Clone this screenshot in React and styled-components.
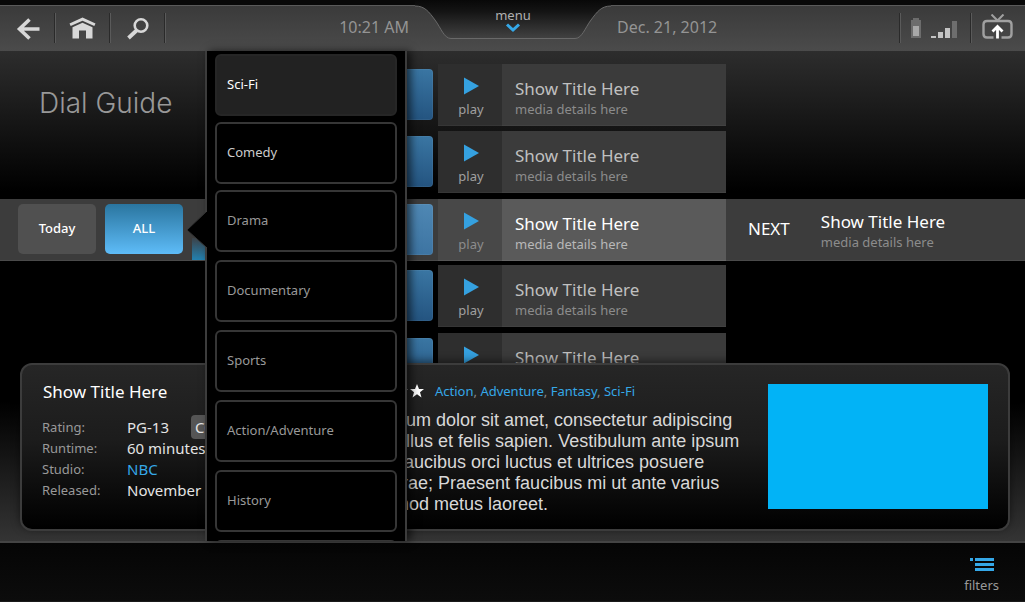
import React from 'react'
import styled, { createGlobalStyle, css } from 'styled-components'

const GlobalStyle = createGlobalStyle`
  * {
    box-sizing: border-box;
  }
  body {
    margin: 0;
    background: #000;
    color: #fff;
    font-family: "Noto Sans", "Open Sans", sans-serif;
  }
  button {
    font-family: inherit;
    border: 0;
    padding: 0;
    background: none;
    color: inherit;
    cursor: pointer;
  }
  a {
    color: #35a8e8;
    text-decoration: none;
  }
  h1, h2, h3, p, ul, dl, dd {
    margin: 0;
    padding: 0;
  }
`

const Page = styled.div`
  display: flex;
  flex-direction: column;
  min-height: 100vh;
`

/* top bar */
const TopBar = styled.header`
  display: flex;
  height: 51px;
  border-top: 5px solid #080808;
  background: linear-gradient(#3a3a3a, #4b4b4b);
  box-shadow: inset 0 1px #5a5a5a;
`
const BarSide = styled.div`
  flex: 1;
  display: flex;
  align-items: center;
  justify-content: space-between;
  padding-left: ${(p) => (p.$right ? '6px' : '1px')};
  padding-right: ${(p) => (p.$right ? '0' : '6px')};
`
const Tools = styled.nav`
  display: flex;
  align-items: center;
`
const divider = css`
  content: '';
  width: 2px;
  height: 30px;
  background: linear-gradient(to right, #2a2a2a 50%, #5a5a5a 50%);
`
const Tool = styled.button`
  display: flex;
  align-items: center;
  width: 55px;
  height: 46px;
  svg {
    flex: 1;
  }
  &::after {
    ${divider}
  }
`
const Status = styled.div`
  display: flex;
  align-items: center;
  gap: 9px;
  height: 46px;
  &::before {
    ${divider}
  }
`
const CastButton = styled.button`
  display: flex;
  align-items: center;
  gap: 10px;
  margin-left: 3px;
  padding-right: 12px;
  &::before {
    ${divider}
  }
`
const Clock = styled.span`
  font-size: 16px;
  line-height: 20px;
  padding-bottom: 2px;
  color: #949494;
`
const MenuTab = styled.button`
  display: grid;
  width: 196px;
  height: 46px;
  margin-top: -5px;
  > * {
    grid-area: 1 / 1;
  }
`
const MenuLabel = styled.span`
  display: flex;
  flex-direction: column;
  align-items: center;
  padding-top: 7px;
  font-size: 13px;
  line-height: 16px;
  color: #b0b0b0;
`

/* guide */
const Main = styled.main`
  position: relative;
  flex: 1;
  display: flex;
  flex-direction: column;
  border-bottom: 2px solid #444;
  background: linear-gradient(#2d2d2d, #000 140px, #000 350px, #343434);
`
const Guide = styled.section`
  display: grid;
  grid-template-columns: 438px 64px 224px 1fr;
  grid-template-rows: 62px 63px 61px 63px 30px;
  row-gap: 5px;
  height: 312px;
  padding-top: 13px;
  overflow: hidden;
`
const Heading = styled.h1`
  grid-area: 1 / 1;
  align-self: center;
  padding: 15px 0 0 39px;
  font-family: Inter, "Liberation Sans", sans-serif;
  font-size: 28px;
  font-weight: 300;
  color: #989898;
`
const Band = styled.div`
  grid-row: 3;
  grid-column: 1 / -1;
  height: 62px;
  background: #3c3c3c;
  border-bottom: 1px solid #4a4a4a;
`
const ChannelTile = styled.div`
  grid-column: 1;
  grid-row: ${(p) => p.$row};
  justify-self: end;
  width: 200px;
  height: 51px;
  margin: 5px 5px 0 0;
  border-radius: 4px;
  background: ${(p) =>
    p.$active ? 'linear-gradient(#4f88b4, #3d74a2)' : 'linear-gradient(#3a76a3, #245480)'};
  box-shadow: inset 0 0 0 1px rgba(255, 255, 255, 0.06);
`
const PlayButton = styled.button`
  grid-column: 2;
  grid-row: ${(p) => p.$row};
  display: flex;
  flex-direction: column;
  align-items: center;
  gap: 5px;
  height: 62px;
  padding: 13px 0 0 2px;
  font-size: 13px;
  line-height: 18px;
  color: ${(p) => (p.$active ? '#8c8c8c' : '#a0a0a0')};
  background: ${(p) => (p.$active ? '#484848' : '#2e2e2e')};
  border-bottom: 1px solid ${(p) => (p.$active ? '#555' : '#363636')};
`
const Show = styled.div`
  grid-column: 3;
  grid-row: ${(p) => p.$row};
  height: 62px;
  padding: 14px 0 0 13px;
  background: ${(p) => (p.$active ? '#5a5a5a' : '#3b3b3b')};
  border-bottom: 1px solid ${(p) => (p.$active ? '#666' : '#424242')};
`
const ShowTitle = styled.h3`
  font-size: 17px;
  font-weight: 400;
  line-height: 22px;
  color: ${(p) => (p.$active ? '#fff' : '#c0c0c0')};
`
const ShowDetails = styled.p`
  font-size: 13px;
  line-height: 18px;
  color: ${(p) => (p.$active ? '#b8b8b8' : '#8c8c8c')};
`
const Next = styled.div`
  grid-column: 4;
  grid-row: 3;
  display: flex;
  align-items: flex-start;
  gap: 31px;
  height: 62px;
  padding: 12px 0 0 22px;
  font-size: 17px;
  line-height: 36px;
`
const DayTabs = styled.div`
  grid-column: 1;
  grid-row: 3;
  display: flex;
  gap: 9px;
  height: 61px;
  padding: 5px 0 0 18px;
`
const DayTab = styled.button`
  width: 78px;
  height: 50px;
  padding-bottom: 2px;
  border-radius: 5px;
  font-size: 13px;
  font-weight: 500;
  background: ${(p) => (p.$active ? 'linear-gradient(#2a759f, #5ebcf8)' : '#505050')};
`
const TabEdge = styled.div`
  align-self: flex-end;
  width: 14px;
  height: 22px;
  background: linear-gradient(#3c4248, #2381b0);
`

/* show details */
const Panel = styled.section`
  flex: 1;
  display: flex;
  justify-content: space-between;
  min-height: 168px;
  margin: 0 15px 10px 20px;
  padding: 19px 20px 9px 20px;
  border: 2px solid #3c3c3c;
  border-radius: 12px;
  background: linear-gradient(#262626, #1c1c1c 45%, #000);
  box-shadow: 0 -2px 8px rgba(0, 0, 0, 0.5);
`
const Facts = styled.div`
  flex: none;
  width: 285px;
`
const FactsTitle = styled.h2`
  padding-left: 1px;
  font-size: 17px;
  font-weight: 400;
  line-height: 16px;
`
const FactList = styled.dl`
  display: grid;
  grid-template-columns: 85px 1fr;
  grid-auto-rows: 21px;
  align-items: center;
  padding-top: 16px;
  dt {
    font-size: 13px;
    color: #999;
  }
  dd {
    font-size: 15px;
    line-height: 20px;
    color: #e4e4e4;
  }
`
const Badge = styled.span`
  margin-left: 22px;
  padding: 2px 4px;
  border-radius: 4px;
  background: #555;
`
const Synopsis = styled.div`
  flex: 1;
`
const Genres = styled.div`
  display: flex;
  align-items: center;
  gap: 11px;
  padding-left: 35px;
  font-size: 13px;
  line-height: 14px;
  color: #888;
`
const Stars = styled.span`
  display: flex;
  gap: 2px;
`
const Description = styled.p`
  padding-top: 12px;
  font-family: "Liberation Sans", Arial, sans-serif;
  font-size: 18px;
  line-height: 21px;
  color: #d8d8d8;
  white-space: pre;
`
const Artwork = styled.div`
  flex: none;
  width: 220px;
  height: 125px;
  background: #02b3f6;
`

/* genre menu */
const GenreMenu = styled.aside`
  position: absolute;
  top: 0;
  bottom: 0;
  left: 205px;
  width: 202px;
  padding: 3px 8px 0 8px;
  border: solid #3c3c3c;
  border-width: 0 2px;
  background: #000;
  box-shadow: 4px 0 8px rgba(0, 0, 0, 0.6);
`
const Pointer = styled.svg`
  position: absolute;
  top: 161px;
  left: -21px;
`
const GenreScroll = styled.div`
  display: flex;
  flex-direction: column;
  gap: 8px;
  height: 100%;
  overflow: hidden;
`
const GenreGroup = styled.div`
  display: flex;
  flex-direction: column;
  gap: ${(p) => p.$gap}px;
`
const Genre = styled.button`
  flex: none;
  height: 62px;
  padding: 0 0 3px 10px;
  border: 2px solid ${(p) => (p.$active ? '#262626' : '#363636')};
  border-radius: 6px;
  font-size: 13px;
  text-align: left;
  color: ${(p) => (p.$active ? '#fff' : p.$bright ? '#ccc' : '#999')};
  background: ${(p) => (p.$active ? '#222' : '#000')};
`

const Footer = styled.footer`
  display: flex;
  justify-content: flex-end;
  height: 59px;
  padding: 14px 26px 0 0;
  background: linear-gradient(#050505, #0c0c0c);
  border-bottom: 1px solid #1a1a1a;
`
const FilterButton = styled.button`
  display: flex;
  flex-direction: column;
  align-items: center;
  gap: 4px;
  height: 38px;
  font-size: 13px;
  line-height: 16px;
  color: #999;
`

const BackIcon = () => (
  <svg height="24" viewBox="0 0 24 24" fill="none" stroke="#d8d8d8" strokeWidth="3.6">
    <path d="M24 13H4M14 3.500 4 13l10 9.500" />
  </svg>
)

const HomeIcon = () => (
  <svg height="22" viewBox="0 0 26 22" fill="#d8d8d8">
    <path d="M13 0.500 0 6.500l1.200 2.500L13 3.800 24.800 9 26 6.500z" />
    <path d="M13 5.800 3 10.200V21.500h6.500v-8h7v8H23V10.200z" />
  </svg>
)

const SearchIcon = () => (
  <svg height="24" viewBox="0 0 24 24" fill="none" stroke="#d8d8d8">
    <circle cx="15.500" cy="9.500" r="6.300" strokeWidth="2.600" />
    <path d="M11 14.500 3 22" strokeWidth="3.800" />
  </svg>
)

const BatteryIcon = () => (
  <svg width="12" height="22" viewBox="0 0 12 22">
    <path d="M3 1h6v2h2v18H1V3h2z" fill="#6c6c6c" />
    <path d="M3 9h6v10H3z" fill="#a8a8a8" />
  </svg>
)

const SignalIcon = () => (
  <svg width="27" height="22" viewBox="0 0 27 22" fill="#c4c4c4">
    <path d="M0 19h5v2H0zM7 15h5v6H7zM14 11h5v10h-5z" />
    <path d="M21 4h5v17h-5z" fill="#6e6e6e" />
  </svg>
)

const CastIcon = () => (
  <svg width="31" height="29" viewBox="0 0 31 29" fill="none">
    <path d="M9.500 0.500l6 6 6-6" stroke="#a0a0a0" strokeWidth="2" />
    <path
      d="M11.500 23.500H5Q1.500 23.500 1.500 20V10.500Q1.500 7 5 7h21Q29.500 7 29.500 10.500v9.500Q29.500 23.500 26 23.500H19.500"
      stroke="#a0a0a0"
      strokeWidth="2.400"
    />
    <path d="M15.500 24.500V13M10.500 17.500l5-5 5 5" stroke="#fff" strokeWidth="2.800" />
  </svg>
)

const PlayIcon = () => (
  <svg width="16" height="18" viewBox="0 0 16 18">
    <path d="M1 0.500v17l15-8.500z" fill="#35a1e0" />
  </svg>
)

const StarIcon = () => (
  <svg width="14" height="14" viewBox="0 0 14 14">
    <path d="M7 0l2 5h5l-4 3.200 1.500 5.300L7 10.300l-4.500 3.200L4 8.200 0 5h5z" fill="#fff" />
  </svg>
)

const rows = [1, 2, 3, 4, 5]
const SELECTED = 3
const LAST = 5 // only its top shows above the details panel

const synopsis = `Lorem ipsum dolor sit amet, consectetur adipiscing
elit Phasellus et felis sapien. Vestibulum ante ipsum
primis in faucibus orci luctus et ultrices posuere
cubilia curae; Praesent faucibus mi ut ante varius
nec euismod metus laoreet.`

export default function App() {
  return (
    <Page>
      <GlobalStyle />
      <TopBar>
        <BarSide>
          <Tools>
            <Tool aria-label="Back"><BackIcon /></Tool>
            <Tool aria-label="Home"><HomeIcon /></Tool>
            <Tool aria-label="Search"><SearchIcon /></Tool>
          </Tools>
          <Clock>10:21 AM</Clock>
        </BarSide>
        <MenuTab>
          <svg width="196" height="40" viewBox="0 0 196 40">
            <defs>
              <linearGradient id="tab" x1="0" y1="0" x2="0" y2="1">
                <stop offset="0" stopColor="#080808" />
                <stop offset="0.3" stopColor="#141414" />
                <stop offset="1" stopColor="#424242" />
              </linearGradient>
            </defs>
            <path d="M0 0V6C10 6 14 12 20 20S29 38.500 36 38.500H160C167 38.500 170 28 176 20S186 6 196 6V0z" fill="url(#tab)" />
            <path d="M0 6C10 6 14 12 20 20S29 38.500 36 38.500H160C167 38.500 170 28 176 20S186 6 196 6" fill="none" stroke="#696969" />
          </svg>
          <MenuLabel>
            menu
            <svg width="16" height="10" viewBox="0 0 16 10" fill="none" stroke="#35a8e8" strokeWidth="3">
              <path d="M2 1.500l6 5.500 6-5.500" />
            </svg>
          </MenuLabel>
        </MenuTab>
        <BarSide $right>
          <Clock>Dec. 21, 2012</Clock>
          <Status>
            <BatteryIcon />
            <SignalIcon />
            <CastButton aria-label="Send to TV"><CastIcon /></CastButton>
          </Status>
        </BarSide>
      </TopBar>

      <Main>
        <Guide>
          <Heading>Dial Guide</Heading>
          <Band />
          <DayTabs>
            <DayTab>Today</DayTab>
            <DayTab $active>ALL</DayTab>
            <TabEdge />
          </DayTabs>
          {rows.map((row) => {
            const active = row === SELECTED
            return (
              <React.Fragment key={row}>
                <ChannelTile $row={row} $active={active} />
                <PlayButton $row={row} $active={active} aria-label="play">
                  <PlayIcon />
                  {row !== LAST && 'play'}
                </PlayButton>
                <Show $row={row} $active={active}>
                  <ShowTitle $active={active}>Show Title Here</ShowTitle>
                  {row !== LAST && <ShowDetails $active={active}>media details here</ShowDetails>}
                </Show>
              </React.Fragment>
            )
          })}
          <Next>
            NEXT
            <div>
              <ShowTitle $active>Show Title Here</ShowTitle>
              <ShowDetails>media details here</ShowDetails>
            </div>
          </Next>
        </Guide>

        <Panel>
          <Facts>
            <FactsTitle>Show Title Here</FactsTitle>
            <FactList>
              <dt>Rating:</dt>
              <dd>PG-13<Badge>CC</Badge></dd>
              <dt>Runtime:</dt>
              <dd>60 minutes</dd>
              <dt>Studio:</dt>
              <dd><a href="#nbc">NBC</a></dd>
              <dt>Released:</dt>
              <dd>November</dd>
            </FactList>
          </Facts>
          <Synopsis>
            <Genres>
              <Stars>
                <StarIcon /><StarIcon /><StarIcon /><StarIcon />
              </Stars>
              <span>
                <a href="#action">Action</a>, <a href="#adventure">Adventure</a>,{' '}
                <a href="#fantasy">Fantasy</a>, <a href="#scifi">Sci-Fi</a>
              </span>
            </Genres>
            <Description>{synopsis}</Description>
          </Synopsis>
          <Artwork />
        </Panel>

        <GenreMenu>
          <Pointer width="22" height="36" viewBox="0 0 22 36">
            <path d="M22 0H20L1 18l19 17h2z" fill="#000" />
            <path d="M20 0 1 18l19 17" fill="none" stroke="#333" />
          </Pointer>
          <GenreScroll>
            <GenreGroup $gap={6}>
              <Genre $active>Sci-Fi</Genre>
              <Genre $bright>Comedy</Genre>
              <Genre>Drama</Genre>
            </GenreGroup>
            <GenreGroup $gap={8}>
              <Genre>Documentary</Genre>
              <Genre>Sports</Genre>
              <Genre>Action/Adventure</Genre>
              <Genre>History</Genre>
              <Genre aria-label="More genres" />
            </GenreGroup>
          </GenreScroll>
        </GenreMenu>
      </Main>

      <Footer>
        <FilterButton>
          <svg width="26" height="16" viewBox="0 0 26 16" fill="#35a8e8">
            <path d="M1 1h3v3H1zM6 1h19v3H6zM6 6h19v3H6zM6 11h19v3H6z" />
          </svg>
          filters
        </FilterButton>
      </Footer>
    </Page>
  )
}
